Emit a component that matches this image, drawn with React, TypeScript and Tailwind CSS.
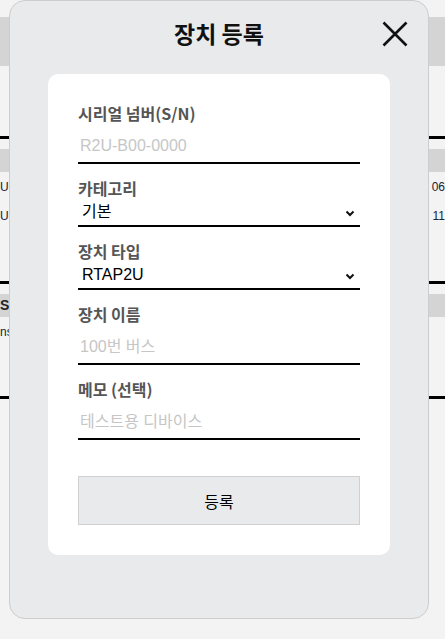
import React from "react";

const kr = "font-['Noto_Sans_CJK_KR','Noto_Sans',sans-serif]";
const field = "font-['Liberation_Sans','Noto_Sans_CJK_KR',sans-serif]";

function Chevron() {
  return (
    <svg width="10" height="7" viewBox="0 0 10 7" className="pointer-events-none absolute right-[5px] top-[11px]">
      <polyline points="1.5,1.5 5,5 8.5,1.5" fill="none" stroke="#111" strokeWidth="2" />
    </svg>
  );
}

function Label({ children }: { children: React.ReactNode }) {
  return <div className={`${kr} h-[22px] text-[16px] font-bold leading-[22px] text-[#555]`}>{children}</div>;
}

function TextField({ label, placeholder }: { label: string; placeholder: string }) {
  return (
    <div className="flex flex-col">
      <Label>{label}</Label>
      <input
        placeholder={placeholder}
        className={`${field} h-[40px] w-full border-b-2 border-black bg-transparent px-[2px] pt-[6px] text-[16px] text-black outline-none placeholder:text-[#c6c6c6]`}
      />
    </div>
  );
}

function SelectField({ label, value, options }: { label: string; value: string; options: string[] }) {
  return (
    <div className="flex flex-col">
      <Label>{label}</Label>
      <div className="relative">
        <select
          defaultValue={value}
          className={`${field} h-[28px] w-full appearance-none border-b-2 border-black bg-transparent px-[4px] text-[16px] leading-[26px] text-black outline-none`}
        >
          {options.map((o) => (
            <option key={o}>{o}</option>
          ))}
        </select>
        <Chevron />
      </div>
    </div>
  );
}

function BgSection({ top, rows }: { top: number; rows: string[][] }) {
  return (
    <div className="flex flex-col" style={{ marginTop: top }}>
      <div className="h-[3px] bg-black" />
      <div className="mt-[10px] h-[23px] bg-[#d4d4d4]" />
      <div className="flex flex-col">
        {rows.map((r, i) => (
          <div key={i} className="flex h-[29px] items-center justify-between text-[12px] text-[#223]">
            <span>{r[0]}</span>
            <span>{r[1]}</span>
          </div>
        ))}
      </div>
    </div>
  );
}

export default function App() {
  return (
    <div className="relative h-[639px] w-[445px] overflow-hidden bg-[#f3f3f3] font-['Liberation_Sans',sans-serif]">
      <div className="flex flex-col pt-[17px]">
        <div className="h-[49px] bg-[#d4d4d4]" />
        <BgSection top={70} rows={[["U-", "06"], ["U-", "11"]]} />
        <div className="mt-[51px] flex flex-col">
          <div className="h-[3px] bg-black" />
          <div className="mt-[10px] flex h-[23px] items-center bg-[#d4d4d4] text-[14px] font-bold text-[#222]">
            <span>S/</span>
          </div>
          <div className="flex h-[30px] items-center text-[12px] text-[#223]">
            <span>ns</span>
          </div>
          <div className="mt-[49px] h-[3px] bg-black" />
        </div>
      </div>

      <div className="absolute inset-0">
        <div className="ml-[9px] flex h-[619px] w-[420px] flex-col rounded-[16px] border border-[#cdcdcd] bg-[#e9eaec] px-[38px]">
          <div className="relative mt-[11px] flex h-[42px] items-center justify-center">
            <h2 className={`${kr} text-[23px] font-bold text-[#111]`}>장치 등록</h2>
            <button className="absolute right-[-18px] top-[9px] h-[26px] w-[26px]">
              <svg viewBox="0 0 26 26" width="26" height="26">
                <path d="M1.5 1.5 L24.5 24.5 M24.5 1.5 L1.5 24.5" stroke="#111" strokeWidth="2.6" fill="none" />
              </svg>
            </button>
          </div>
          <div className="mt-[20px] flex flex-col rounded-[10px] bg-white px-[30px] pb-[30px] pt-[28px]">
            <div className="flex flex-col gap-[13px]">
              <TextField label="시리얼 넘버(S/N)" placeholder="R2U-B00-0000" />
              <SelectField label="카테고리" value="기본" options={["기본", "버스", "택시"]} />
              <SelectField label="장치 타입" value="RTAP2U" options={["RTAP2U", "RTAP1"]} />
              <TextField label="장치 이름" placeholder="100번 버스" />
              <TextField label="메모 (선택)" placeholder="테스트용 디바이스" />
            </div>
            <button
              className={`${kr} mt-[36px] h-[49px] w-full border border-[#d0d0d0] bg-[#e9eaec] text-[16px] text-black`}
            >
              등록
            </button>
          </div>
        </div>
      </div>
    </div>
  );
}
